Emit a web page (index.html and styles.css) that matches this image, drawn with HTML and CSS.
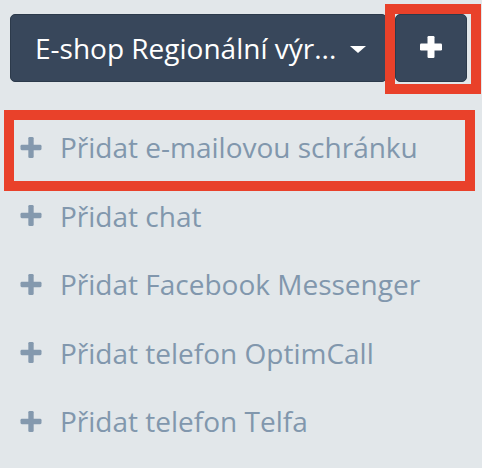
FILE: index.html
```html
<!DOCTYPE html>
<html lang="cs">
<head>
<meta charset="utf-8">
<link rel="stylesheet" href="styles.css">
</head>
<body>
<div class="page">
  <div class="toolbar">
    <button class="dropdown">
      <span class="dropdown-label">E-shop Regionální výr...</span>
      <span class="caret"></span>
    </button>
    <button class="add-btn">
      <svg class="add-icon" viewBox="0 0 22 22" width="22" height="22"><rect x="7.5" y="0" width="7" height="22" rx="1.2"/><rect x="0" y="7.5" width="22" height="7" rx="1.2"/></svg>
      <span class="mark mark-btn"></span>
    </button>
  </div>
  <ul class="menu">
    <li class="item"><svg class="plus" viewBox="0 0 22 22" width="22" height="21"><rect x="8.2" y="0" width="5.6" height="22" rx="1.4"/><rect x="0" y="8.2" width="22" height="5.6" rx="1.4"/></svg><span>Přidat e-mailovou schránku</span><span class="mark mark-item"></span></li>
    <li class="item"><svg class="plus" viewBox="0 0 22 22" width="22" height="21"><rect x="8.2" y="0" width="5.6" height="22" rx="1.4"/><rect x="0" y="8.2" width="22" height="5.6" rx="1.4"/></svg><span>Přidat chat</span></li>
    <li class="item"><svg class="plus" viewBox="0 0 22 22" width="22" height="21"><rect x="8.2" y="0" width="5.6" height="22" rx="1.4"/><rect x="0" y="8.2" width="22" height="5.6" rx="1.4"/></svg><span>Přidat Facebook Messenger</span></li>
    <li class="item"><svg class="plus" viewBox="0 0 22 22" width="22" height="21"><rect x="8.2" y="0" width="5.6" height="22" rx="1.4"/><rect x="0" y="8.2" width="22" height="5.6" rx="1.4"/></svg><span>Přidat telefon OptimCall</span></li>
    <li class="item"><svg class="plus" viewBox="0 0 22 22" width="22" height="21"><rect x="8.2" y="0" width="5.6" height="22" rx="1.4"/><rect x="0" y="8.2" width="22" height="5.6" rx="1.4"/></svg><span>Přidat telefon Telfa</span></li>
  </ul>
</div>
</body>
</html>
```

FILE: styles.css
```css
* { box-sizing: border-box; }
html, body {
  margin: 0;
  padding: 0;
  background: #e2e7ea;
  font-family: "Open Sans", "Noto Sans", sans-serif;
}
.page {
  width: 482px;
  height: 468px;
  overflow: hidden;
}
.toolbar {
  display: flex;
  gap: 8px;
  padding: 14px 0 0 10px;
}
.dropdown {
  display: flex;
  align-items: center;
  width: 377px;
  height: 68px;
  padding: 0 0 0 24px;
  background: #38475b;
  border: 1px solid #2c3a4b;
  border-radius: 5px;
  color: #ffffff;
  font-family: inherit;
  font-size: 28px;
  line-height: 38px;
  text-align: left;
}
.dropdown-label {
  white-space: nowrap;
}
.caret {
  width: 0;
  height: 0;
  margin-left: 14px;
  margin-top: 2px;
  border-left: 8px solid transparent;
  border-right: 8px solid transparent;
  border-top: 7px solid #ffffff;
}
.add-btn {
  position: relative;
  display: flex;
  align-items: center;
  justify-content: center;
  width: 72px;
  height: 68px;
  padding: 0;
  background: #38475b;
  border: 1px solid #2c3a4b;
  border-radius: 5px;
}
.add-icon {
  fill: #ffffff;
  margin-top: -2px;
}
.mark {
  position: absolute;
  border: 10px solid #e9412a;
  pointer-events: none;
}
.mark-btn {
  left: -11px;
  top: -11px;
  width: 96px;
  height: 90px;
}
.menu {
  list-style: none;
  margin: 30.75px 0 0 0;
  padding: 0;
}
.item {
  position: relative;
  display: flex;
  align-items: center;
  height: 68.5px;
  padding-left: 20px;
  color: #8197ad;
  font-size: 28px;
  line-height: 38px;
  white-space: nowrap;
}
.plus {
  fill: #8499ae;
  margin-right: 18px;
  flex: none;
}
.mark-item {
  left: 4px;
  top: -2.75px;
  width: 471px;
  height: 81px;
}
```
